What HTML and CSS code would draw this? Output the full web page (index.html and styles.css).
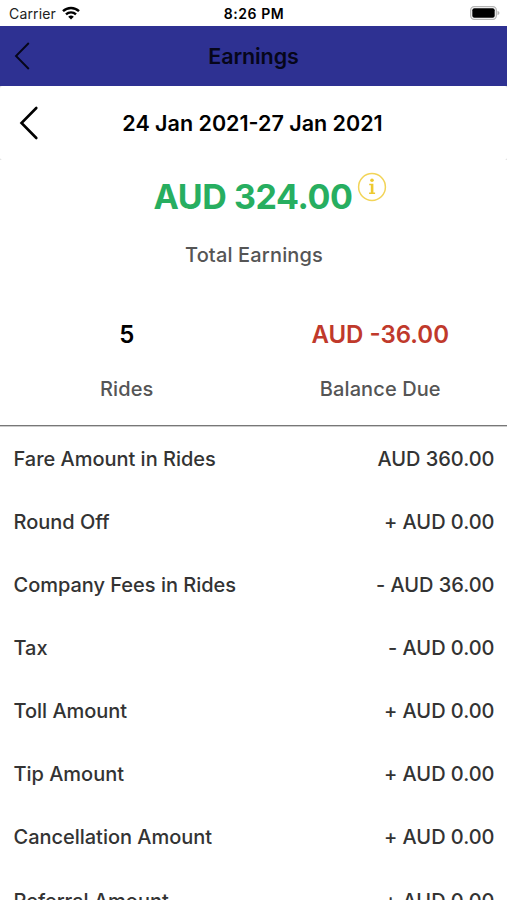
FILE: index.html
```html
<!DOCTYPE html>
<html lang="en">
<head>
<meta charset="utf-8">
<title>Earnings</title>
<link rel="stylesheet" href="styles.css">
</head>
<body>
<div class="status">
  <div class="carrier"><span class="t-carrier">Carrier</span>
    <svg class="wifi" width="18" height="14" viewBox="0 0 18 14"><g fill="none" stroke="#000" stroke-width="2.4"><path d="M1 5.2a11.5 11.5 0 0 1 16 0"/><path d="M4 8.4a7.2 7.2 0 0 1 10 0"/></g><path d="M9 13.6L6.2 10.8a4 4 0 0 1 5.6 0z"/></svg>
  </div>
  <span class="t-time">8:26 PM</span>
  <svg class="battery" width="30" height="14" viewBox="0 0 30 14"><rect x=".7" y=".7" width="25.600" height="12.600" rx="3.500" fill="#fff" stroke="#b5b5b5" stroke-width="1.300"/><rect x="2.300" y="2.300" width="22.400" height="9.400" rx="2"/><path d="M27.500 4.800q2 .8 2 2.200t-2 2.200z" fill="#b5b5b5"/></svg>
</div>
<header class="nav">
  <svg class="nav-back" width="16" height="28" viewBox="0 0 16 28"><path d="M14.800 1L2 14l12.800 13" fill="none" stroke="#06061a" stroke-width="1.900"/></svg>
  <h1 class="t-title">Earnings</h1>
</header>
<div class="range">
  <svg class="range-back" width="20" height="34" viewBox="0 0 20 34"><path d="M17.300 2L2.500 17l14.800 15" fill="none" stroke="#000" stroke-width="2.600" stroke-linecap="round"/></svg>
  <span class="t-range">24 Jan 2021-27 Jan 2021</span>
</div>
<main>
  <section class="total">
    <div class="amount"><span class="t-amount">AUD 324.00</span>
      <svg class="info" width="30" height="30" viewBox="0 0 30 30"><circle cx="15" cy="15" r="13.400" fill="none" stroke="#f2d458" stroke-width="1.500"/><g fill="#edc92f"><circle cx="15" cy="8.300" r="1.800"/><path d="M12.200 11.700h4.200v8.700h1.700v1.500h-6v-1.500h1.700v-7.200h-1.600z"/></g></svg>
    </div>
    <div class="t-total">Total Earnings</div>
  </section>
  <section class="stats">
    <div class="stat"><b class="t-five">5</b><span class="t-rides">Rides</span></div>
    <div class="stat"><b class="due t-due">AUD -36.00</b><span class="t-balance">Balance Due</span></div>
  </section>
  <ul class="rows">
    <li><span>Fare Amount in Rides</span><span>AUD 360.00</span></li>
    <li><span>Round Off</span><span>+ AUD 0.00</span></li>
    <li><span>Company Fees in Rides</span><span>- AUD 36.00</span></li>
    <li><span>Tax</span><span>- AUD 0.00</span></li>
    <li><span>Toll Amount</span><span>+ AUD 0.00</span></li>
    <li><span>Tip Amount</span><span>+ AUD 0.00</span></li>
    <li><span>Cancellation Amount</span><span>+ AUD 0.00</span></li>
    <li><span>Referral Amount</span><span>+ AUD 0.00</span></li>
  </ul>
</main>
</body>
</html>
```

FILE: styles.css
```css
* { box-sizing: border-box; }
body { margin: 0; height: 900px; overflow: hidden; display: flex; flex-direction: column; background: #fff; color: #333; font-family: Inter, sans-serif; font-size: 20px; font-weight: 500; white-space: nowrap; }
.status { height: 25.500px; flex: none; display: grid; grid-template-columns: 1fr auto 1fr; align-items: center; padding: 1px 7px 0 9px; color: #000; font-size: 14px; }
.carrier { display: flex; align-items: center; gap: 6px; font-weight: 400; color: #222; letter-spacing: .15px; }
.wifi { margin-top: -1px; }
.t-time { font-weight: 600; font-size: 14px; letter-spacing: .55px; margin-left: -1px; }
.battery { justify-self: end; margin-top: -1px; }
.nav { height: 60.500px; flex: none; display: grid; grid-template-columns: 40px 1fr 40px; align-items: center; background: #2e3192; color: #06061a; }
.nav-back { margin-left: 14px; }
h1 { margin: 0; text-align: center; font-size: 21.500px; font-weight: 600; letter-spacing: -.1px; }
.range { height: 74px; flex: none; display: grid; grid-template-columns: 40px 1fr 40px; align-items: center; color: #000; font-size: 21.500px; font-weight: 600; text-align: center; background: radial-gradient(circle at 4px 4px, #fff 4px, #e2e2e2 5px) 0 0 / 4px 4px no-repeat, radial-gradient(circle at 0 4px, #fff 4px, #e2e2e2 5px) 100% 0 / 4px 4px no-repeat, radial-gradient(circle at 4px 0, #fff 4px, #e2e2e2 5px) 0 100% / 4px 4px no-repeat, radial-gradient(circle at 0 0, #fff 4px, #e2e2e2 5px) 100% 100% / 4px 4px no-repeat; }
.t-range { margin-left: -2px; }
.range-back { margin-left: 19px; }
.total { height: 142px; text-align: center; color: #555; }
.amount { display: flex; justify-content: center; height: 73px; padding: 12px 0 0 33px; gap: 4px; color: #27ae60; font-size: 34px; font-weight: 700; line-height: 50px; letter-spacing: -.4px; }
.t-total { line-height: 44px; letter-spacing: .15px; padding-left: 1px; }
.stats { height: 124px; display: grid; grid-template-columns: 1fr 1fr; border-bottom: 1px solid #777; box-shadow: 0 1px 0 #ccc; }
.stat { display: flex; flex-direction: column; align-items: center; color: #555; }
.stat b { color: #000; font-size: 24px; font-weight: 600; line-height: 66px; }
.stat .due { color: #c0392b; }
.stat span { line-height: 42px; letter-spacing: .1px; }
.rows { list-style: none; margin: 0; padding: 1px 12.500px 0 13.500px; letter-spacing: -.02px; }
.rows li { height: 63.150px; display: flex; align-items: center; justify-content: space-between; }
```
